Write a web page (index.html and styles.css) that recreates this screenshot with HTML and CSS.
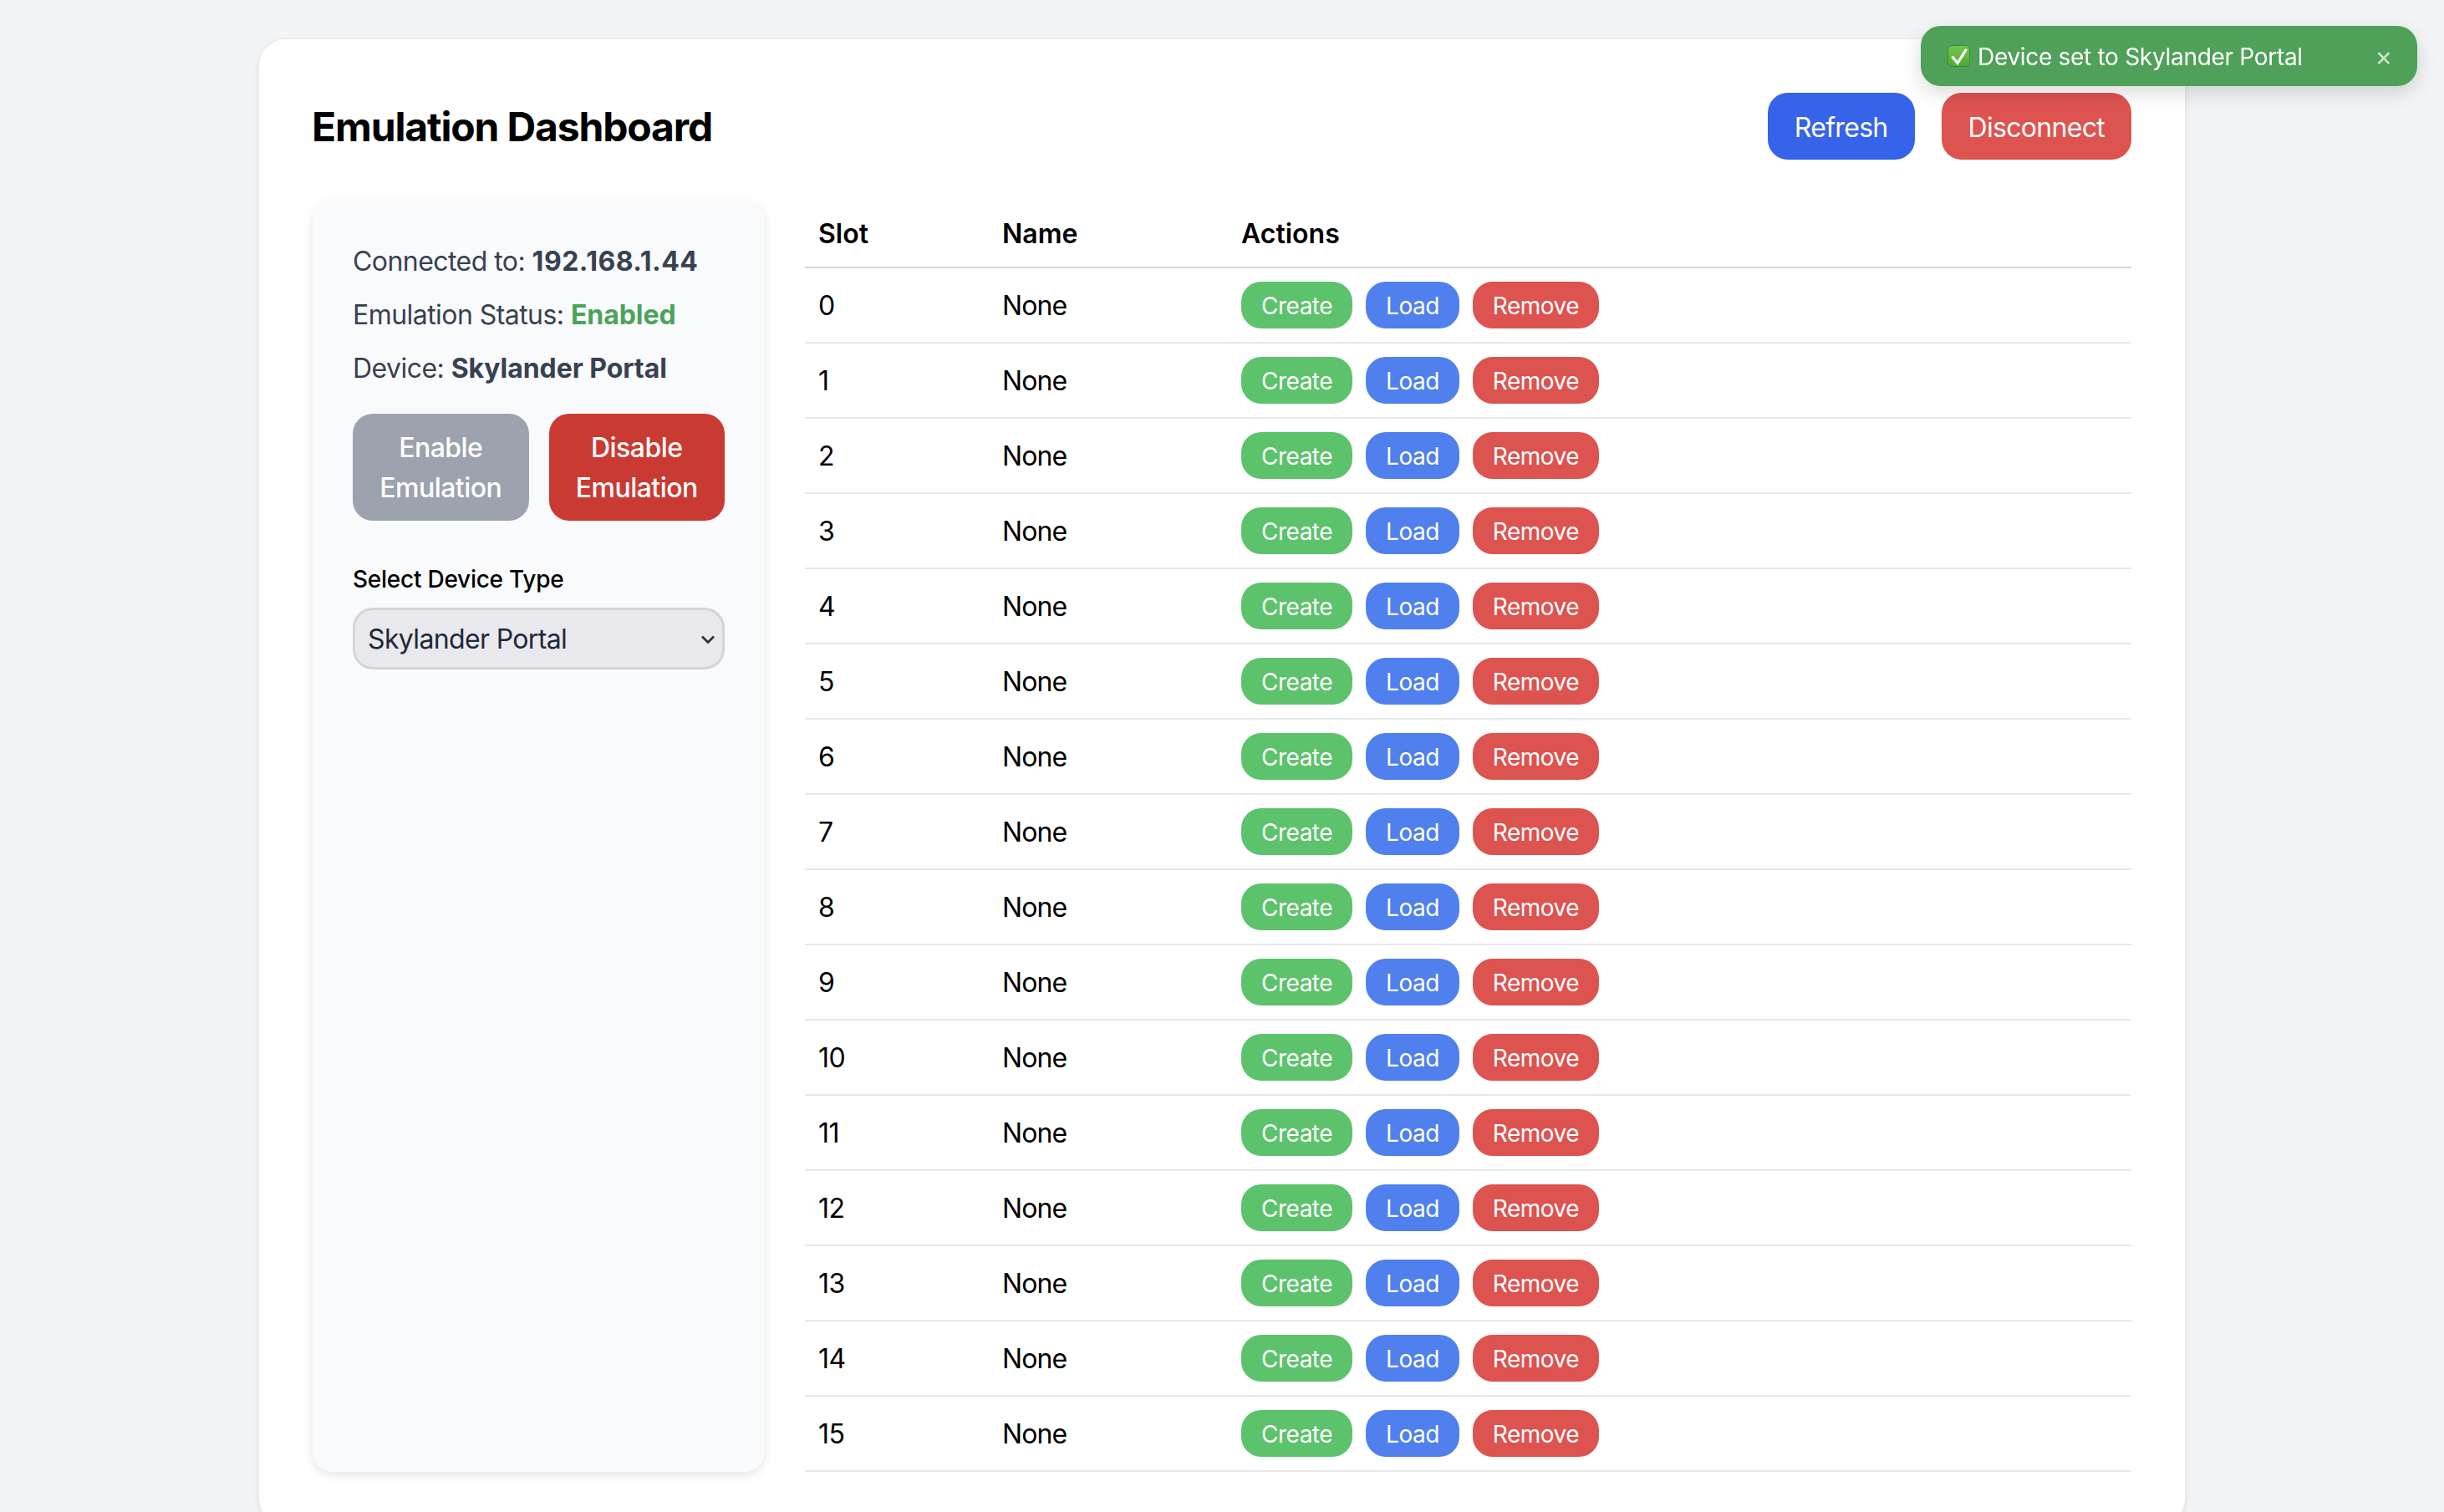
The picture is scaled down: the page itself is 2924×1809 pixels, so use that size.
FILE: index.html
```html
<!DOCTYPE html>
<html lang="en">
<head>
    <meta charset="UTF-8">
    <meta name="viewport" content="width=device-width, initial-scale=1.0">
    <title>Emulation Dashboard</title>
    <link rel="stylesheet" href="styles.css">
</head>
<body>
    <div class="toast">
        <svg class="toast-check" viewBox="0 0 27 26" width="27" height="26">
            <defs>
                <linearGradient id="checkFill" x1="0" y1="0" x2="0" y2="1">
                    <stop offset="0" stop-color="#74c653"/>
                    <stop offset="1" stop-color="#52a832"/>
                </linearGradient>
            </defs>
            <rect x="0.5" y="0.5" width="26" height="25" rx="5" fill="url(#checkFill)" stroke="#3f8a35"/>
            <path d="M5.5 13.5l6.5 8L22.5 5" fill="none" stroke="#fff" stroke-width="3.2"/>
        </svg>
        <span class="toast-text">Device set to Skylander Portal</span>
        <span class="toast-close">×</span>
    </div>

    <main class="card">
        <header class="top">
            <h1>Emulation Dashboard</h1>
            <div class="top-buttons">
                <button class="btn-top blue">Refresh</button>
                <button class="btn-top red">Disconnect</button>
            </div>
        </header>

        <div class="layout">
            <aside class="side">
                <p>Connected to: <strong class="ip">192.168.1.44</strong></p>
                <p>Emulation Status: <strong class="on">Enabled</strong></p>
                <p>Device: <strong>Skylander Portal</strong></p>
                <div class="emu-buttons">
                    <button class="btn-emu grey">Enable Emulation</button>
                    <button class="btn-emu dark-red">Disable Emulation</button>
                </div>
                <label for="deviceType">Select Device Type</label>
                <div class="select-wrap">
                    <select id="deviceType">
                        <option>Skylander Portal</option>
                    </select>
                    <svg class="chevron" viewBox="0 0 16 10" width="16" height="10">
                        <path d="M1 1.5l7 7 7-7" fill="none" stroke="#2a3446" stroke-width="2.8"/>
                    </svg>
                </div>
            </aside>

            <table class="slots">
                <thead>
                    <tr><th class="col-slot">Slot</th><th class="col-name">Name</th><th>Actions</th></tr>
                </thead>
                <tbody>
                    <tr><td>0</td><td>None</td><td><div class="actions"><button class="green">Create</button><button class="blue-l">Load</button><button class="red">Remove</button></div></td></tr>
                    <tr><td>1</td><td>None</td><td><div class="actions"><button class="green">Create</button><button class="blue-l">Load</button><button class="red">Remove</button></div></td></tr>
                    <tr><td>2</td><td>None</td><td><div class="actions"><button class="green">Create</button><button class="blue-l">Load</button><button class="red">Remove</button></div></td></tr>
                    <tr><td>3</td><td>None</td><td><div class="actions"><button class="green">Create</button><button class="blue-l">Load</button><button class="red">Remove</button></div></td></tr>
                    <tr><td>4</td><td>None</td><td><div class="actions"><button class="green">Create</button><button class="blue-l">Load</button><button class="red">Remove</button></div></td></tr>
                    <tr><td>5</td><td>None</td><td><div class="actions"><button class="green">Create</button><button class="blue-l">Load</button><button class="red">Remove</button></div></td></tr>
                    <tr><td>6</td><td>None</td><td><div class="actions"><button class="green">Create</button><button class="blue-l">Load</button><button class="red">Remove</button></div></td></tr>
                    <tr><td>7</td><td>None</td><td><div class="actions"><button class="green">Create</button><button class="blue-l">Load</button><button class="red">Remove</button></div></td></tr>
                    <tr><td>8</td><td>None</td><td><div class="actions"><button class="green">Create</button><button class="blue-l">Load</button><button class="red">Remove</button></div></td></tr>
                    <tr><td>9</td><td>None</td><td><div class="actions"><button class="green">Create</button><button class="blue-l">Load</button><button class="red">Remove</button></div></td></tr>
                    <tr><td>10</td><td>None</td><td><div class="actions"><button class="green">Create</button><button class="blue-l">Load</button><button class="red">Remove</button></div></td></tr>
                    <tr><td>11</td><td>None</td><td><div class="actions"><button class="green">Create</button><button class="blue-l">Load</button><button class="red">Remove</button></div></td></tr>
                    <tr><td>12</td><td>None</td><td><div class="actions"><button class="green">Create</button><button class="blue-l">Load</button><button class="red">Remove</button></div></td></tr>
                    <tr><td>13</td><td>None</td><td><div class="actions"><button class="green">Create</button><button class="blue-l">Load</button><button class="red">Remove</button></div></td></tr>
                    <tr><td>14</td><td>None</td><td><div class="actions"><button class="green">Create</button><button class="blue-l">Load</button><button class="red">Remove</button></div></td></tr>
                    <tr><td>15</td><td>None</td><td><div class="actions"><button class="green">Create</button><button class="blue-l">Load</button><button class="red">Remove</button></div></td></tr>
                </tbody>
            </table>
        </div>
    </main>
</body>
</html>
```

FILE: styles.css
```css
html, body {
    height: 1809px;
    overflow: hidden;
}
body {
    margin: 0;
    padding-top: 47px;
    box-sizing: border-box;
    background: #f3f4f6;
    color: #000;
    font-family: Inter, "Noto Sans", sans-serif;
    font-size: 32px;
    line-height: 48px;
    letter-spacing: -0.55px;
}
button, select {
    font-family: inherit;
    letter-spacing: inherit;
    border: 0;
}

.card {
    width: 2304px;
    box-sizing: border-box;
    margin: 0 auto;
    padding: 64px;
    background: #fff;
    border-radius: 32px;
    box-shadow: 0 2px 8px rgba(0, 0, 0, 0.1);
}
.top {
    display: flex;
    justify-content: space-between;
    align-items: center;
    margin-bottom: 48px;
}
h1 {
    margin: 0 0 0 -1px;
    padding-top: 2px;
    font-size: 48px;
    line-height: 78px;
    font-weight: 700;
    letter-spacing: -1.15px;
}
.top-buttons {
    display: flex;
    gap: 32px;
}
.btn-top {
    height: 80px;
    padding: 3px 32px 0;
    border-radius: 24px;
    color: #fff;
    font-size: 32px;
    line-height: 48px;
    letter-spacing: -0.7px;
}
.btn-top.blue { background: #3563e9; }

.layout {
    display: grid;
    grid-template-columns: 541px 1587px;
    gap: 48px;
}
.side {
    padding: 48px;
    background: #f9fafb;
    border-radius: 24px;
    box-shadow: 0 4px 12px rgba(0, 0, 0, 0.1);
    color: #374151;
}
.side p {
    margin: 0 0 14px;
    padding-top: 2px;
    white-space: nowrap;
}
.side strong { letter-spacing: -0.05px; }
.side .ip { letter-spacing: 0.5px; }
.on { color: #4aa35a; }
.emu-buttons {
    display: flex;
    gap: 24px;
    margin: 30px 0 48px;
}
.btn-emu {
    width: 210px;
    flex: 1 1 0;
    padding: 17px 24px 15px;
    border-radius: 24px;
    color: #fff;
    font-size: 32px;
    line-height: 48px;
    font-weight: 500;
}
.grey { background: #9ca3af; }
.dark-red { background: #c93a32; }
label {
    display: block;
    margin-bottom: 14px;
    padding-top: 2px;
    color: #000;
    font-size: 28px;
    line-height: 40px;
    font-weight: 500;
    letter-spacing: -0.25px;
}
.select-wrap {
    position: relative;
}
select {
    display: block;
    width: 100%;
    height: 74px;
    padding: 0 15px;
    appearance: none;
    background: #e9e8ed;
    border: 3px solid #d1d5db;
    border-radius: 24px;
    color: #1f2937;
    font-size: 32px;
    letter-spacing: -0.65px;
}
.chevron {
    position: absolute;
    top: 33px;
    right: 12px;
}

.slots {
    width: 100%;
    align-self: start;
    table-layout: fixed;
    border-collapse: separate;
    border-spacing: 0;
}
.slots th {
    padding: 17px 16px 15px;
    text-align: left;
    font-weight: 600;
    letter-spacing: 0;
    border-bottom: 2px solid #d1d5db;
}
.col-slot { width: 188px; }
.col-name { width: 254px; }
.slots td {
    padding: 16px;
    border-bottom: 2px solid #e5e7eb;
}
.slots td:not(:last-child) {
    padding-top: 18px;
}
.slots td:nth-child(2) {
    letter-spacing: -0.9px;
}
.actions {
    display: flex;
    gap: 16px;
}
.actions button {
    height: 56px;
    padding: 2px 24px 0;
    border-radius: 24px;
    color: #fff;
    font-size: 28px;
    line-height: 40px;
    letter-spacing: -0.5px;
}
.green { background: #5dc26c; }
.blue-l { background: #4f80ee; }
.red { background: #dd534f; }

.toast {
    position: fixed;
    top: 31px;
    right: 32px;
    display: flex;
    align-items: center;
    width: 594px;
    height: 72px;
    box-sizing: border-box;
    padding: 2px 32px 0;
    background: #4fa058;
    border-radius: 24px;
    box-shadow: 0 8px 24px rgba(0, 0, 0, 0.15);
    color: #fff;
    font-size: 28px;
    line-height: 40px;
    letter-spacing: -0.3px;
}
.toast-check {
    flex: none;
    margin-right: 9px;
    margin-top: -2px;
}
.toast-text {
    flex: 1;
}
.toast-close {
    opacity: 0.7;
    margin-right: -2px;
    font-size: 32px;
}
```
